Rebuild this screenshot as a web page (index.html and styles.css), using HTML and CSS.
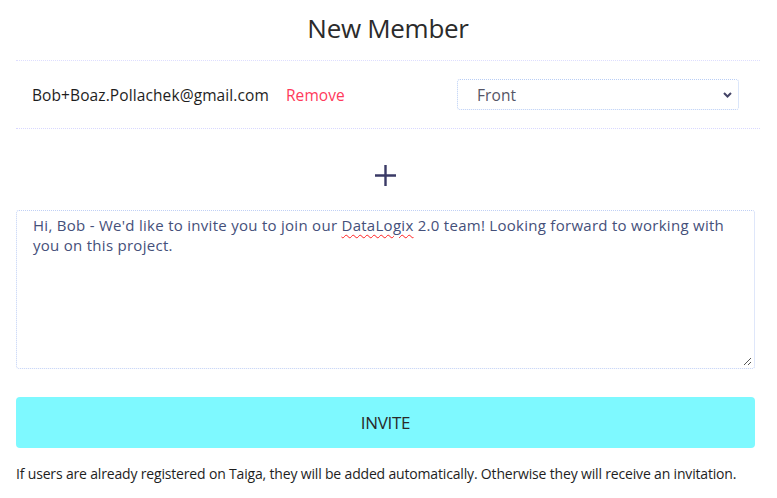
FILE: index.html
```html
<!DOCTYPE html>
<html>
<head>
<meta charset="utf-8">
<link rel="stylesheet" href="styles.css">
</head>
<body>
<div class="panel">
  <h1 class="title">New Member</h1>
  <div class="member-row">
    <span class="email">Bob+Boaz.Pollachek@gmail.com</span>
    <a class="remove">Remove</a>
    <div class="select">
      <span class="select-value">Front</span>
      <svg class="chevron" width="9" height="6" viewBox="0 0 9 6"><path d="M1 1 L4.5 4.5 L8 1" fill="none" stroke="#444466" stroke-width="2"/></svg>
    </div>
  </div>
  <div class="add">
    <svg width="21" height="21" viewBox="0 0 21 21"><path d="M10.5 0 V21 M0 10.5 H21" stroke="#3a3a66" stroke-width="2.4"/></svg>
  </div>
  <div class="message">
    <p class="message-text">Hi, Bob - We'd like to invite you to join our <span class="spell">DataLogix</span> 2.0 team! Looking forward to working with you on this project.</p>
    <svg class="grip" width="9" height="9" viewBox="0 0 9 9"><path d="M1 8 L8 1 M5 8 L8 5" stroke="#555" stroke-width="1"/></svg>
  </div>
  <button class="invite">INVITE</button>
  <p class="note">If users are already registered on Taiga, they will be added automatically. Otherwise they will receive an invitation.</p>
</div>
</body>
</html>
```
FILE: styles.css
```css
* { box-sizing: border-box; }
body {
  margin: 0;
  background: #fff;
  font-family: "Open Sans", "Noto Sans", sans-serif;
}
.panel {
  padding: 0 22px 0 16px;
  display: flex;
  flex-direction: column;
}
.title {
  margin: 0;
  height: 61px;
  padding-top: 10px;
  text-align: center;
  font-weight: 400;
  font-size: 26px;
  line-height: 36px;
  color: #2b2b2b;
  letter-spacing: -0.3px;
  border-bottom: 1px dotted #dedeff;
  margin-right: -5px;
}
.member-row {
  display: flex;
  align-items: center;
  height: 68px;
  padding-left: 16px;
  border-bottom: 1px dotted #d8d8ff;
  margin-right: -5px;
}
.email {
  font-size: 15.5px;
  color: #1e1e1e;
  letter-spacing: 0.1px;
}
.remove {
  margin-left: 17px;
  font-size: 15.5px;
  color: #ff3a5c;
  letter-spacing: 0.1px;
}
.select {
  margin-left: auto;
  margin-right: 21px;
  width: 282px;
  height: 31px;
  border: 1px dotted #b8cdf5;
  border-radius: 3px;
  display: flex;
  align-items: center;
  padding: 0 6px 0 19px;
}
.select-value {
  font-size: 15.5px;
  color: #555566;
  letter-spacing: 0.1px;
}
.chevron { margin-left: auto; }
.add {
  display: flex;
  justify-content: center;
  padding: 36px 0 24px 0;
}
.add svg { display: block; }
.message {
  position: relative;
  height: 159px;
  border: 1px dotted #c0d0f5;
  border-radius: 3px;
  padding: 4px 24px 0 16px;
}
.message-text {
  margin: 0;
  font-size: 15px;
  line-height: 20px;
  color: #45507a;
  letter-spacing: 0.28px;
}
.spell {
  text-decoration: underline wavy #ff2020;
  text-decoration-thickness: 1px;
  text-underline-offset: 3px;
}
.grip {
  position: absolute;
  right: 2px;
  bottom: 2px;
}
.invite {
  margin-top: 28px;
  height: 51px;
  border: none;
  border-radius: 4px;
  background: #7ef9ff;
  font-family: inherit;
  font-size: 17px;
  color: #2a2a2a;
  letter-spacing: -0.3px;
}
.note {
  margin: 16px 0 0;
  font-size: 14px;
  line-height: 20px;
  color: #1e1e1e;
  letter-spacing: -0.17px;
}
```
